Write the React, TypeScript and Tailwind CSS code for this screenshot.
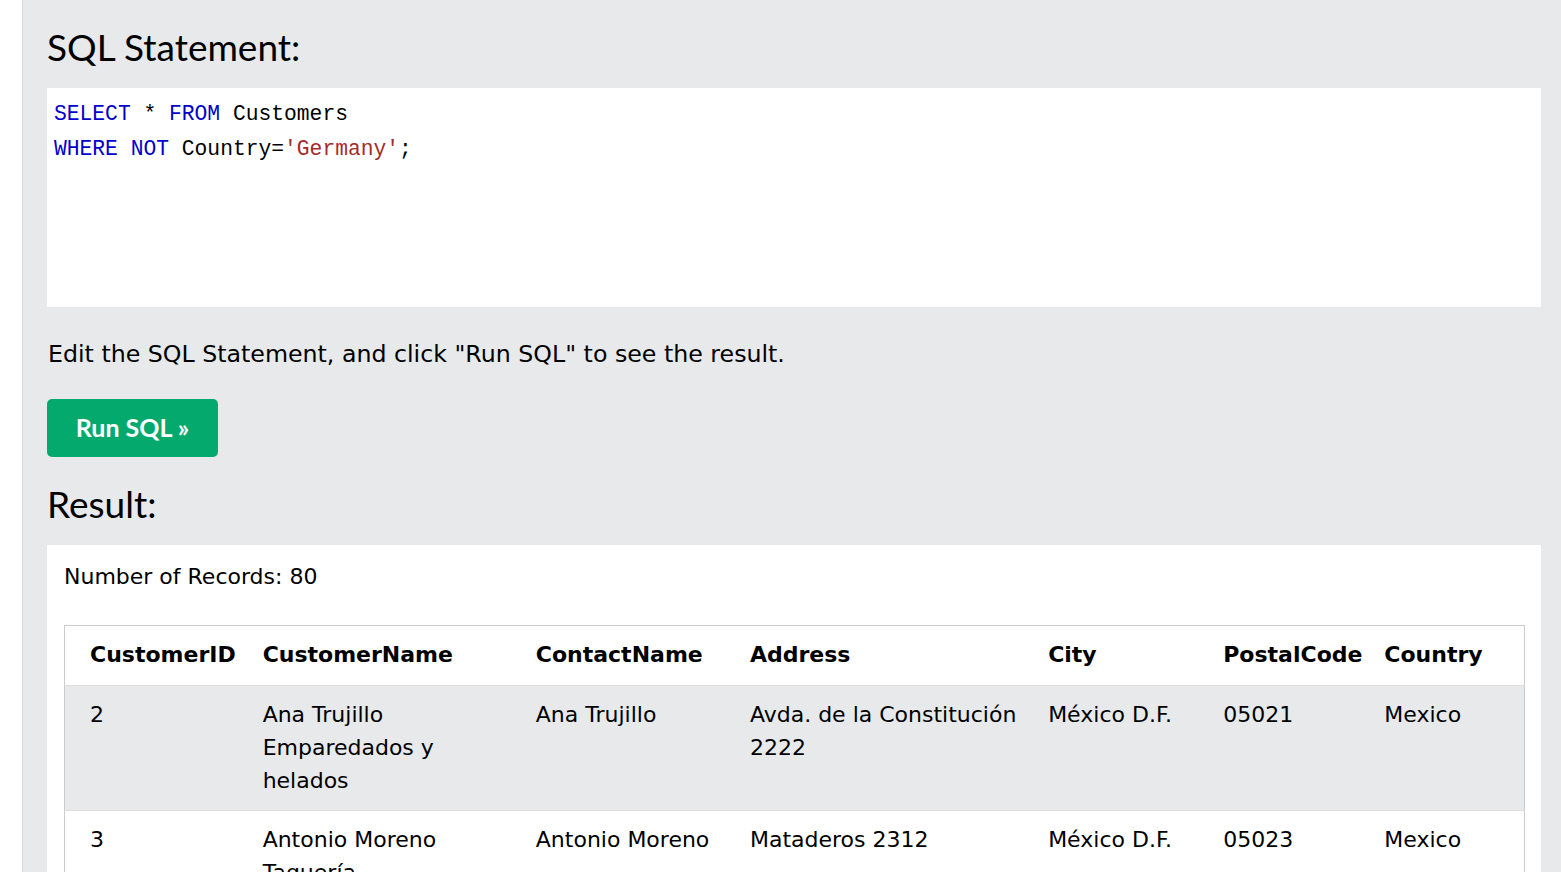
import React from 'react';

const headerCells = ['CustomerID', 'CustomerName', 'ContactName', 'Address', 'City', 'PostalCode', 'Country'];

const rows = [
  ['2', 'Ana Trujillo Emparedados y helados', 'Ana Trujillo', 'Avda. de la Constitución 2222', 'México D.F.', '05021', 'Mexico'],
  ['3', 'Antonio Moreno Taquería', 'Antonio Moreno', 'Mataderos 2312', 'México D.F.', '05023', 'Mexico'],
  ['4', 'Around the Horn', 'Thomas Hardy', '120 Hanover Sq.', 'London', 'WA1 1DP', 'UK'],
];

// column widths taken from the screenshot
const colWidths = ['w-[188px]', 'w-[273px]', 'w-[214px]', 'w-[298px]', 'w-[175px]', 'w-[161px]', 'w-[150px]'];

const App = () => {
  return (
    <div className="flex h-[872px] overflow-hidden bg-white">
      {/* narrow white strip on the left */}
      <div className="w-[23px] shrink-0 border-r border-[#d9d9d9] bg-white" />

      <div className="flex-1 bg-[#e7e9eb] pl-[24px] pr-[20px] pt-[22px]">
        <h3 className="font-['Lato',sans-serif] text-[37px] leading-[50px] text-black">SQL Statement:</h3>

        <div className="mt-[16px] h-[219px] bg-white px-[7px] pt-[9px] font-['Liberation_Mono',monospace] text-[21.3px] leading-[35px] text-black">
          <div>
            <span className="text-[#0000cd]">SELECT</span> * <span className="text-[#0000cd]">FROM</span> Customers
          </div>
          <div>
            <span className="text-[#0000cd]">WHERE</span> <span className="text-[#0000cd]">NOT</span> Country=<span className="text-[#a52a2a]">'Germany'</span>;
          </div>
        </div>

        <p className="mt-[31px] pl-[1px] font-['DejaVu_Sans',sans-serif] text-[23.7px] leading-[32px] text-black">
          Edit the SQL Statement, and click "Run SQL" to see the result.
        </p>

        <button className="mt-[29px] flex h-[58px] w-[171px] items-center justify-center rounded-[5px] bg-[#04aa6d] font-['Lato',sans-serif] text-[25px] font-bold text-white">
          Run SQL »
        </button>

        <h3 className="mt-[24px] font-['Lato',sans-serif] text-[37px] leading-[46px] text-black">Result:</h3>

        <div className="mt-[18px] bg-white pl-[17px] pr-[16px] pt-[16px] pb-[20px] font-['DejaVu_Sans',sans-serif] text-[22px] text-black">
          <div className="leading-[32px]">Number of Records: 80</div>

          <table className="mt-[32px] w-full table-fixed border-collapse border border-[#cccccc]">
            <thead>
              <tr className="border-b border-[#dddddd] bg-white">
                {headerCells.map((h, i) => (
                  <th
                    key={h}
                    className={`${colWidths[i]} ${i === 0 ? 'pl-[25px]' : 'pl-[10px]'} pr-[10px] pt-[12px] pb-[14px] text-left align-top font-bold leading-[33px]`}
                  >
                    {h}
                  </th>
                ))}
              </tr>
            </thead>
            <tbody>
              {rows.map((r, ri) => (
                <tr key={ri} className={`border-b border-[#dddddd] ${ri % 2 === 0 ? 'bg-[#e7e9eb]' : 'bg-white'}`}>
                  {r.map((c, i) => (
                    <td
                      key={i}
                      className={`${i === 0 ? 'pl-[25px]' : 'pl-[10px]'} pr-[10px] pt-[12px] pb-[13px] align-top leading-[33px]`}
                    >
                      {c}
                    </td>
                  ))}
                </tr>
              ))}
            </tbody>
          </table>
        </div>
      </div>
    </div>
  );
};

export default App;
